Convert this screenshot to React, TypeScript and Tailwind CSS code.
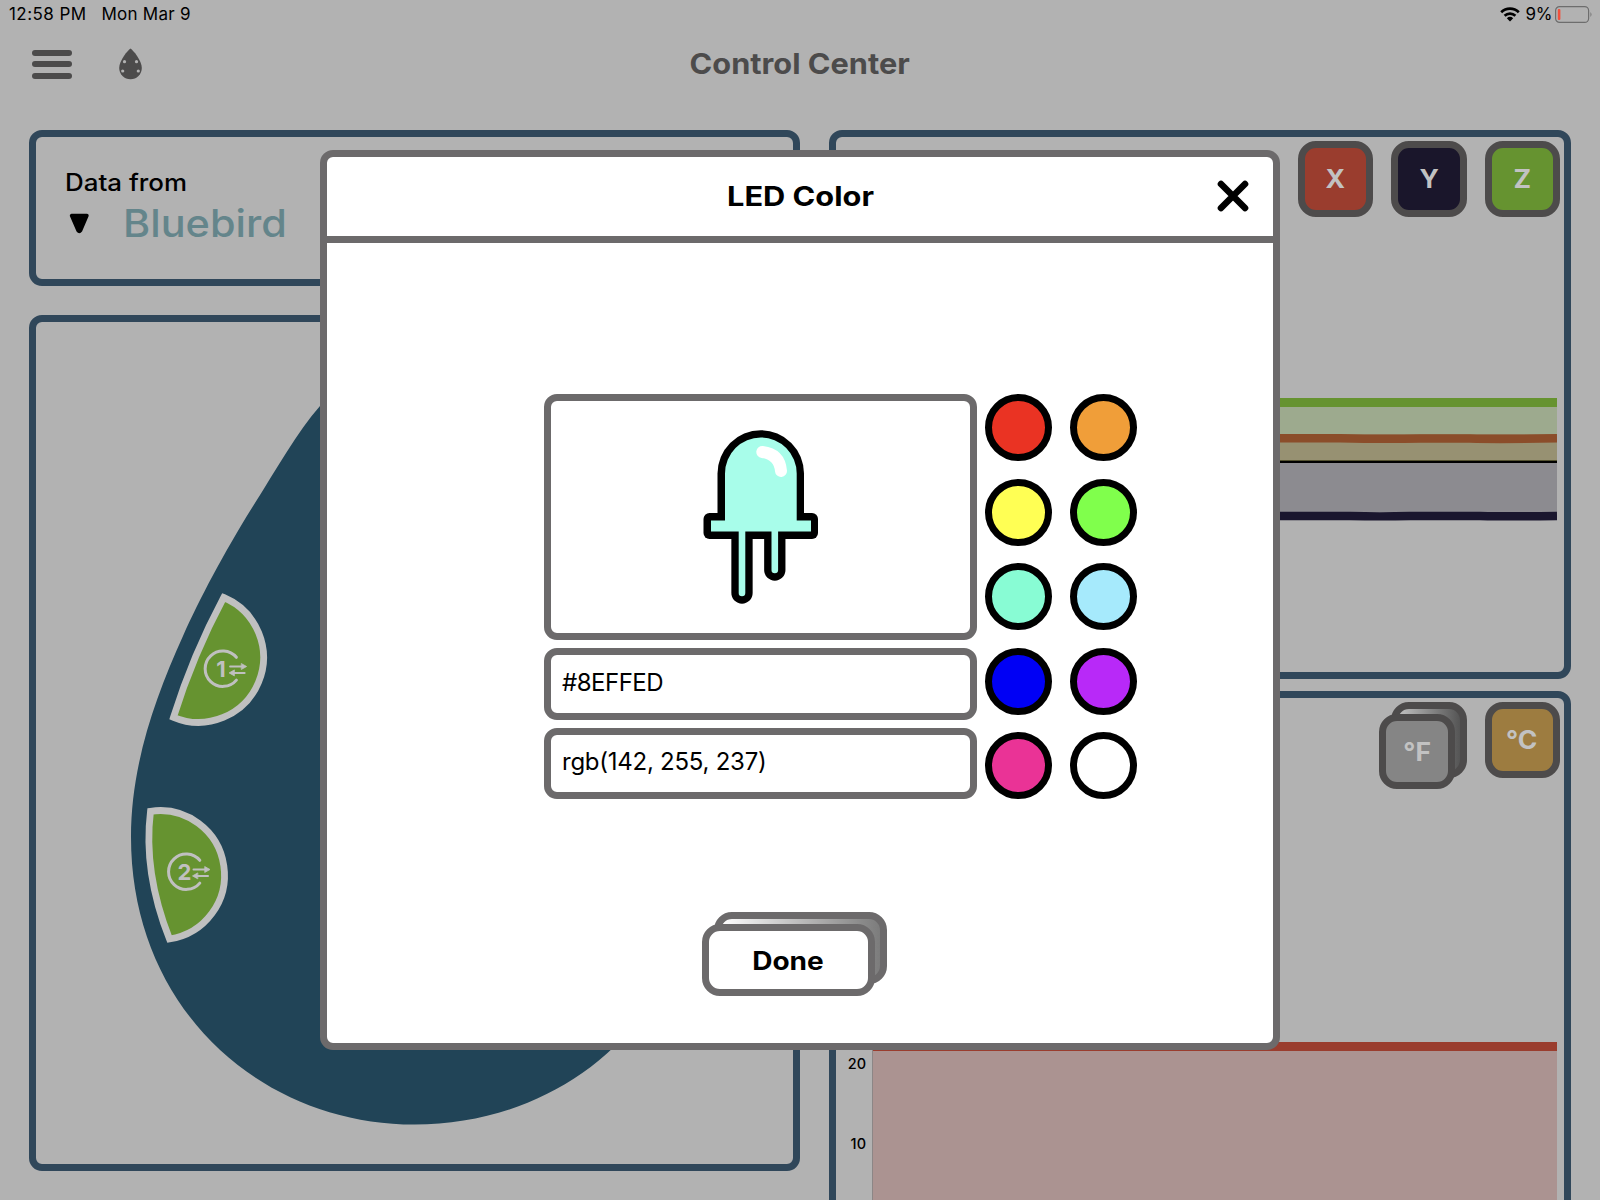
import React from "react";

const swatches = [
  "bg-[#ea3323]", "bg-[#f09e39]",
  "bg-[#ffff54]", "bg-[#80ff4c]",
  "bg-[#88fcd4]", "bg-[#a6eafc]",
  "bg-[#0000f5]", "bg-[#b829f8]",
  "bg-[#ea3396]", "bg-white",
];

function StatusBar() {
  return (
    <div className="flex h-7 items-center justify-between pl-[9px] pr-[7px] pt-px text-[17px] leading-none text-black">
      <div className="flex gap-[15px]">
        <span className="tracking-[0.43px]">12:58 PM</span>
        <span className="tracking-[0.25px]">Mon Mar 9</span>
      </div>
      <div className="flex items-center">
        <svg className="mr-[6px]" width="20" height="15" viewBox="0 0 20 15">
          <g fill="none" stroke="#000" strokeWidth="2.7">
            <path d="M1.2 5.3 A12.6 12.6 0 0 1 18.8 5.3" />
            <path d="M4.6 8.8 A7.8 7.8 0 0 1 15.4 8.8" />
          </g>
          <path d="M10 14.6 L6.8 11.3 A4.7 4.7 0 0 1 13.2 11.3 Z" />
        </svg>
        <span className="mr-[3px] tracking-[-0.4px]">9%</span>
        <svg width="38" height="17" viewBox="0 0 38 17">
          <rect x="0.6" y="0.6" width="33" height="15.8" rx="4" fill="none" stroke="#6d6d6d" strokeWidth="1.2" />
          <rect x="2.8" y="3" width="2.6" height="11" rx="1" fill="#f0503c" />
          <path d="M35.5 6 Q37.4 8.5 35.5 11 Z" fill="#6d6d6d" />
        </svg>
      </div>
    </div>
  );
}

function Header() {
  return (
    <div className="grid h-[70px] grid-cols-3 items-center text-[#4c4b4b]">
      <div className="flex items-center gap-[46px] pl-8 pt-0.5">
        <div className="flex w-10 flex-col gap-[5.5px]">
          <div className="h-[6px] rounded-full bg-current" />
          <div className="h-[6px] rounded-full bg-current" />
          <div className="h-[6px] rounded-full bg-current" />
        </div>
        <svg width="25" height="32" viewBox="0 0 25 32">
          <path d="M12.5 0.5 C15 2 23.8 12.5 23.8 20 A11.3 11.3 0 0 1 1.2 20 C1.2 12.5 10 2 12.5 0.5 Z" fill="currentColor" />
          <g fill="#b2b2b2">
            <circle cx="6.5" cy="13.7" r="1.6" />
            <circle cx="18.5" cy="13.7" r="1.6" />
            <circle cx="4.7" cy="23" r="1.6" />
            <circle cx="20.3" cy="23" r="1.6" />
          </g>
        </svg>
      </div>
      <h1 className="scale-x-[1.06] text-center text-[29px] font-bold leading-none">Control Center</h1>
    </div>
  );
}

function PortIcon({ x, y, label }: { x: number; y: number; label: string }) {
  return (
    <g transform={`translate(${x} ${y})`} stroke="#c0c0c0" fill="none" strokeLinecap="round">
      <path d="M13.8 -11.4 A17.7 17.7 0 1 0 13.8 11.4" strokeWidth="3" />
      <g strokeWidth="2">
        <path d="M7.5 -2.2 H20" />
        <path d="M10 4.2 H22" />
      </g>
      <path d="M19 -5 L24 -2.2 L19 0.6 Z M11.5 1.4 L6.5 4.2 L11.5 7 Z" fill="#c0c0c0" strokeWidth="0.8" strokeLinejoin="round" />
      <text x="-1.5" y="7.8" textAnchor="middle" fontSize="22" fontWeight="700" fill="#c0c0c0" stroke="none">{label}</text>
    </g>
  );
}

function Finch() {
  return (
    <svg className="h-full w-full" viewBox="36 322 757 842">
      <path
        d="M414 300 C375 345 343 378 320 406 C297 432 276 470 255 503 C226 549 200 598 183 636 C155 698 131 765 131 837 C131 1010 262 1124.5 414.5 1124.5 C570 1124.5 700 1010 700 837 C700 765 671 698 643 636 C626 598 600 549 571 503 C550 470 529 432 506 406 C483 378 451 345 414 300 Z"
        fill="#214457"
      />
      <g fill="#669330" stroke="#c0c0c0" strokeWidth="6.8">
        <path d="M223.7 597.5 A64.8 64.8 0 0 1 173.5 717.3 Q193 655 223.7 597.5 Z" />
        <path d="M150.5 811.3 A64.5 64.5 0 0 1 169.5 939 Q143 872 150.5 811.3 Z" />
      </g>
      <PortIcon x={222.6} y={668.7} label="1" />
      <PortIcon x={186} y={871.7} label="2" />
    </svg>
  );
}

function Tile({ color, children }: { color: string; children: React.ReactNode }) {
  return (
    <div className={`flex size-[75.5px] items-center justify-center rounded-[18px] border-[7px] border-[#4d4b4b] pt-0.5 text-[25px] font-bold leading-none text-[#c2c2c2] ${color}`}>
      <span className="scale-x-[1.06]">{children}</span>
    </div>
  );
}

function Led() {
  return (
    <svg width="116" height="176" viewBox="703 429 116 176">
      <path d="M717.5 520 V473.5 A43.2 43.2 0 0 1 804 473.5 V520 Z" />
      <rect x="703.5" y="513" width="114.5" height="26" rx="6" />
      <g stroke="#000" strokeWidth="21.3" strokeLinecap="round">
        <path d="M742 535 V593" />
        <path d="M774.8 535 V570" />
      </g>
      <path d="M725 521 V473.5 A35.8 36 0 0 1 796.7 473.5 V520.5 H811 V531.5 H711 V520.5 H725 Z" fill="#a8fdea" />
      <g stroke="#a8fdea" strokeWidth="6.6" strokeLinecap="round">
        <path d="M742 529 V593" />
        <path d="M774.8 529 V570" />
      </g>
      <path d="M762.3 452 Q779.5 454 781 471" fill="none" stroke="#fff" strokeWidth="12" strokeLinecap="round" />
    </svg>
  );
}

function LedDialog() {
  return (
    <div className="absolute left-[320px] top-[150px] flex h-[900px] w-[960px] flex-col rounded-[13px] border-[7px] border-[#6c6a6b] bg-white text-black">
      <div className="grid h-[86px] shrink-0 grid-cols-[1fr_auto_1fr] items-center border-b-[7px] border-[#6c6a6b]">
        <h2 className="col-start-2 scale-x-[1.14] text-[27px] font-bold leading-none">LED Color</h2>
        <svg className="mb-0.5 mr-6 justify-self-end" width="32" height="32" viewBox="0 0 32 32">
          <path d="M4 4 L28 28 M28 4 L4 28" stroke="#000" strokeWidth="6.6" strokeLinecap="round" />
        </svg>
      </div>
      <div className="flex gap-2 pl-[217px] pt-[151px]">
        <div className="flex w-[433px] flex-col gap-2">
          <div className="flex h-[246px] items-center justify-center rounded-[13px] border-[7px] border-[#6c6a6b]">
            <Led />
          </div>
          <div className="flex h-[71.5px] items-center rounded-[13px] border-[7px] border-[#6c6a6b] pl-[11px] pb-0.5 text-[24px] leading-none tracking-[-0.5px]">
            #8EFFED
          </div>
          <div className="flex h-[71.5px] items-center rounded-[13px] border-[7px] border-[#6c6a6b] pl-[11px] pb-0.5 text-[24px] leading-none tracking-[-0.25px]">
            rgb(142, 255, 237)
          </div>
        </div>
        <div className="grid grid-cols-[67px_67px] content-between gap-x-[17.5px]">
          {swatches.map((c) => (
            <div key={c} className={`size-[67px] rounded-full border-[7px] border-black ${c}`} />
          ))}
        </div>
      </div>
      <div className="relative ml-[375px] mt-[124.5px] h-[72.5px] w-[173px]">
        <div className="absolute -right-3 -top-3 h-[72.5px] w-[173px] rounded-[18px] border-[7px] border-[#6c6a6b] bg-linear-to-r from-white to-[#7c7c7c]" />
        <div className="relative flex h-full items-center justify-center rounded-[18px] border-[7px] border-[#6c6a6b] bg-white pr-0.5 pt-[3px] text-[25px] font-bold leading-none">
          <span className="scale-x-[1.12]">Done</span>
        </div>
      </div>
    </div>
  );
}

export default function App() {
  return (
    <div className="relative h-[1200px] w-[1600px] overflow-hidden bg-[#b2b2b2] font-['Inter',sans-serif]">
      <StatusBar />
      <Header />
      <div className="flex gap-[29px] px-[29px] pt-8">
        <div className="flex w-[771px] flex-col gap-[29px]">
          <div className="h-[156px] rounded-[13px] border-[7px] border-[#30475a] pl-[29px] pt-[33px]">
            <div className="w-max origin-left scale-x-[1.08] text-[24px] font-medium leading-[26px] text-black">Data from</div>
            <div className="flex items-center pl-1 pt-[7px]">
              <svg width="21" height="21" viewBox="0 0 21 21">
                <path d="M2.5 2.5 H18 L11.6 17.5 Q10.3 19.4 9 17.5 Z" stroke="#000" strokeWidth="3.4" strokeLinejoin="round" />
              </svg>
              <span className="ml-[33px] origin-left scale-x-[1.09] text-[38px] font-medium leading-10 text-[#64858b]">Bluebird</span>
            </div>
          </div>
          <div className="h-[856px] rounded-[13px] border-[7px] border-[#30475a]">
            <Finch />
          </div>
        </div>
        <div className="flex w-[742px] flex-col gap-3">
          <div className="h-[549px] rounded-[13px] border-[7px] border-[#30475a] px-1 pt-1">
            <div className="flex justify-end gap-[18px]">
              <Tile color="bg-[#9a3d2e]">X</Tile>
              <Tile color="bg-[#1a162b]">Y</Tile>
              <Tile color="bg-[#669330]">Z</Tile>
            </div>
            <svg className="ml-[33px] mt-[177.5px]" width="684" height="130" viewBox="873 394 684 130">
              <rect x="873" y="398" width="684" height="9" fill="#669330" />
              <rect x="873" y="407" width="684" height="27" fill="#9daa8e" />
              <rect x="873" y="434" width="684" height="26.5" fill="#979172" />
              <path d="M873 438.3 H1340 Q1385 439.2 1420 438.5 H1470 Q1500 439.3 1557 438.2" fill="none" stroke="#8b4d2a" strokeWidth="8.6" />
              <rect x="873" y="463" width="684" height="49" fill="#8c8b90" />
              <rect x="873" y="460" width="684" height="1" fill="#53512f" />
              <rect x="873" y="461" width="684" height="2" fill="#000" />
              <path d="M873 516 H1350 Q1380 516.7 1410 516 H1480 Q1510 516.6 1557 516" fill="none" stroke="#1a162e" strokeWidth="8.4" />
            </svg>
          </div>
          <div className="h-[530px] rounded-[13px] border-[7px] border-[#30475a] px-1 pt-1">
            <div className="flex justify-end gap-[18px]">
              <div className="relative h-[87px] w-[87.5px]">
                <div className="absolute right-0 top-0 size-[75.5px] rounded-[18px] border-[7px] border-[#4d4b4b] bg-linear-to-r from-[#b8b8b8] from-10% to-[#555]" />
                <div className="absolute bottom-0 left-0">
                  <Tile color="bg-[#858585]">°F</Tile>
                </div>
              </div>
              <Tile color="bg-[#9d7c40]">°C</Tile>
            </div>
            <div className="mt-[253px] flex">
              <div className="flex w-[32px] flex-col items-end gap-[65.5px] pr-[6px] pt-[13.5px] text-[14.5px] font-medium leading-[15px] text-black">
                <span>20</span>
                <span>10</span>
              </div>
              <div className="h-[175px] w-[685px] border-l border-l-[#8c8686] bg-[#ab9391]">
                <div className="h-[9px] bg-[#9a3d2e]" />
              </div>
            </div>
          </div>
        </div>
      </div>
      <LedDialog />
    </div>
  );
}
